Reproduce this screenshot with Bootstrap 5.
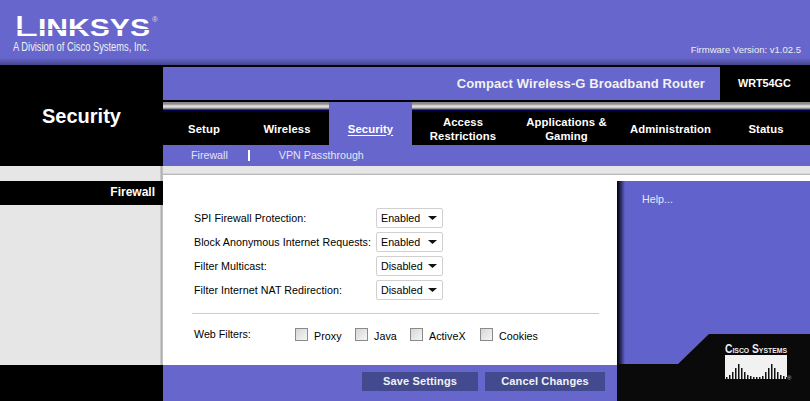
<!DOCTYPE html>
<html lang="en">
<head>
  <meta charset="UTF-8">
  <title>Linksys WRT54GC - Security</title>
  <link href="https://cdn.jsdelivr.net/npm/bootstrap@5.3.0/dist/css/bootstrap.min.css" rel="stylesheet">
  <style>
    html, body { height: 100%; overflow: hidden; }
    body { font-family: "Liberation Sans", Arial, sans-serif; font-size: 10.7px; color: #000; background: #fff; }
    .top-head { flex: none; height: 65px; padding: 0 9px 0 13px; background: linear-gradient(to bottom, #6666cc 0, #6666cc 58px, #45458c 65px); color: #fff; }
    .brand-logo { display: block; }
    .firmware { font-size: 9.5px; line-height: 12px; margin-top: 44px; color: #eee; }
    .mid-band { flex: none; height: 101px; background: #000; }
    .page-title { width: 163px; padding-top: 39px; font-size: 20px; line-height: 24px; font-weight: 700; color: #fff; text-align: center; }
    .title-bar { height: 33px; margin-top: 2px; margin-bottom: 2px; }
    .product-name { width: 557px; padding-right: 15px; background: #6666cc; color: #f2f2f2; font-size: 13px; font-weight: 700; line-height: 33px; text-align: right; letter-spacing: .1px; }
    .model-name { flex: 1; color: #fff; font-size: 10.8px; font-weight: 700; line-height: 33px; padding-left: 18px; }
    .tab-row { height: 43px; background: linear-gradient(to bottom, #858585 0, #8f8f8f 2px, #e2e2e2 4px, #dcdcdc 5px, #777 7px, #000050 8px, #000040 10px, #000 10px) no-repeat; }
    .tab-item { padding-top: 10px; color: #fff; font-size: 11.3px; font-weight: 700; line-height: 14px; text-align: center; letter-spacing: .1px; height: 100%; }
    .tab-item.tab-on { background: #6666cc; }
    .tab-item.tab-on u { text-underline-offset: 2px; }
    .sub-nav { height: 21px; background: #6666cc; color: #e4e4f4; line-height: 21px; padding-left: 28px; }
    .sub-sep { width: 2px; height: 11px; margin: 0 29px 0 20px; background: #fff; }
    .main-part { width: 617px; }
    .body-main { flex: none; height: 199px; }
    .left-col { width: 163px; padding-top: 15px; background: linear-gradient(to right, #e6e6e6 160px, #aaa 161px, #c8c8c8 163px); }
    .side-head { height: 24px; line-height: 22px; padding-right: 8px; background: #000; color: #fff; font-size: 12px; font-weight: 700; text-align: right; }
    .form-panel { flex: 1; background: #fff; }
    .grey-strip { height: 9px; background: linear-gradient(to bottom, #e6e6e6 7px, #aaa 9px); }
    .form-inner { padding: 33px 18px 0 29px; }
    .set-row { height: 20px; margin-bottom: 4px; }
    .set-label { width: 184px; padding: 1px 0 0 2px; letter-spacing: .05px; white-space: nowrap; }
    .form-select.router-select { width: 67px; height: 20px; padding: 0 0 0 4px; border: 1px solid #d0d0d0; border-radius: 2px; font-size: 10.7px; line-height: 18px; color: #000; box-shadow: none;
      background-image: url("data:image/svg+xml,%3Csvg xmlns='http://www.w3.org/2000/svg' width='9' height='4'%3E%3Cpath d='M0 0h9L4.500 4z' fill='%23111'/%3E%3C/svg%3E"); background-size: 9px 4px; background-position: right 5px center; }
    .rule-line { height: 1px; margin: 13px 0 14px; background: #ccc; }
    .filter-label { width: 103px; padding-left: 2px; line-height: 13px; }
    .form-check-input.box-input { width: 13px; height: 13px; margin: 0 6px 0 0; border: 1px solid #8a8a8a; border-radius: 0; background: linear-gradient(135deg, #d6d6d6, #f6f6f6); flex: none; box-shadow: none; }
    .box-text { line-height: 13px; margin-top: 2px; letter-spacing: .05px; }
    .foot-row { flex: 1; background: #6666cc; }
    .foot-black { width: 163px; background: #000; }
    .foot-btns { flex: 1; padding: 7px 12px 0 0; gap: 7px; }
    .btn.router-btn { height: 19px; padding: 0; border: 0; border-radius: 0; background: #434a8f; color: #f2f2f2; font-size: 11px; font-weight: 700; line-height: 17px; letter-spacing: .15px; }
    .btn-save { width: 116px; }
    .btn-cancel { width: 120px; }
    .right-part { flex: 1; background: #fff; }
    .help-panel { flex: none; height: 153px; margin-top: 6px; padding: 10px 0 0 25px; color: #e8e8f8; background: linear-gradient(to right, #000 0, #2c2c66 4px, #6262cc 8px); }
    .cisco-art { display: block; flex: none; background: linear-gradient(to right, #000 0, #2c2c66 4px, #6262cc 8px); }
    .cisco-fill { flex: 1; background: #0a0a0a; }
  </style>
</head>
<body class="d-flex flex-column">
  <div class="top-head d-flex justify-content-between">
    <svg class="brand-logo" width="200" height="58" viewBox="0 0 200 58" role="img" aria-label="Linksys">
      <text x="1" y="36" fill="#fff" font-family="Liberation Sans" font-size="30" textLength="24" lengthAdjust="spacingAndGlyphs">L</text>
      <text x="25" y="36" fill="#fff" font-family="Liberation Sans" font-weight="700" font-size="23" textLength="112" lengthAdjust="spacingAndGlyphs">INKSYS</text>
      <rect x="0" y="29" width="140" height="1" fill="#6666cc"/>
      <text x="139" y="22" fill="#ddd" font-family="Liberation Sans" font-size="8">®</text>
      <text x="0" y="51" fill="#f0f0f0" font-family="Liberation Sans" font-size="12" textLength="136" lengthAdjust="spacingAndGlyphs">A Division of Cisco Systems, Inc.</text>
    </svg>
    <div class="firmware">Firmware Version: v1.02.5</div>
  </div>

  <div class="mid-band d-flex">
    <div class="page-title">Security</div>
    <div class="flex-grow-1">
      <div class="title-bar d-flex">
        <div class="product-name">Compact Wireless-G Broadband Router</div>
        <div class="model-name">WRT54GC</div>
      </div>
      <div class="tab-row d-flex">
        <div class="tab-item d-flex align-items-center justify-content-center" style="width:82px">Setup</div>
        <div class="tab-item d-flex align-items-center justify-content-center" style="width:84px">Wireless</div>
        <div class="tab-item tab-on d-flex align-items-center justify-content-center" style="width:83px"><u>Security</u></div>
        <div class="tab-item d-flex align-items-center justify-content-center" style="width:102px">Access<br>Restrictions</div>
        <div class="tab-item d-flex align-items-center justify-content-center" style="width:105px">Applications &amp;<br>Gaming</div>
        <div class="tab-item d-flex align-items-center justify-content-center" style="width:103px">Administration</div>
        <div class="tab-item d-flex align-items-center justify-content-center" style="width:88px">Status</div>
      </div>
      <div class="sub-nav d-flex align-items-center">Firewall<span class="sub-sep"></span>VPN Passthrough</div>
    </div>
  </div>

  <div class="d-flex flex-grow-1">
    <div class="main-part d-flex flex-column">
      <div class="d-flex body-main">
        <div class="left-col">
          <div class="side-head">Firewall</div>
        </div>
        <div class="form-panel">
          <div class="grey-strip"></div>
          <div class="form-inner">
            <div class="set-row d-flex align-items-center"><div class="set-label">SPI Firewall Protection:</div><select class="form-select router-select"><option>Enabled</option><option>Disabled</option></select></div>
            <div class="set-row d-flex align-items-center"><div class="set-label">Block Anonymous Internet Requests:</div><select class="form-select router-select"><option>Enabled</option><option>Disabled</option></select></div>
            <div class="set-row d-flex align-items-center"><div class="set-label">Filter Multicast:</div><select class="form-select router-select"><option>Disabled</option><option>Enabled</option></select></div>
            <div class="set-row d-flex align-items-center"><div class="set-label">Filter Internet NAT Redirection:</div><select class="form-select router-select"><option>Disabled</option><option>Enabled</option></select></div>
            <div class="rule-line"></div>
            <div class="d-flex align-items-start">
              <div class="filter-label">Web Filters:</div>
              <input class="form-check-input box-input" type="checkbox" id="fProxy"><label class="box-text" for="fProxy" style="width:41px">Proxy</label>
              <input class="form-check-input box-input" type="checkbox" id="fJava"><label class="box-text" for="fJava" style="width:36px">Java</label>
              <input class="form-check-input box-input" type="checkbox" id="fActive"><label class="box-text" for="fActive" style="width:51px">ActiveX</label>
              <input class="form-check-input box-input" type="checkbox" id="fCookies"><label class="box-text" for="fCookies">Cookies</label>
            </div>
          </div>
        </div>
      </div>
      <div class="foot-row d-flex">
        <div class="foot-black"></div>
        <div class="foot-btns d-flex justify-content-end align-items-start">
          <button class="btn router-btn btn-save" type="button">Save Settings</button>
          <button class="btn router-btn btn-cancel" type="button">Cancel Changes</button>
        </div>
      </div>
    </div>
    <div class="right-part d-flex flex-column">
      <div class="grey-strip"></div>
      <div class="help-panel">Help...</div>
      <svg class="cisco-art" width="193" height="64" viewBox="0 0 193 64" role="img" aria-label="Cisco Systems">
        <polygon points="0,30 61,30 92,0 193,0 193,64 0,64" fill="#0a0a0a"/>
        <text x="108" y="19" fill="#eee" font-family="Liberation Sans" font-weight="700" font-size="12" textLength="62" lengthAdjust="spacingAndGlyphs" style="font-variant:small-caps">Cisco Systems</text>
        <rect x="108" y="21" width="62" height="24" fill="#f1f1f1"/>
        <path id="ciscoBars" fill="#111" d=""/>
        <text x="170" y="46" fill="#bbb" font-family="Liberation Sans" font-size="6">®</text>
      </svg>
      <div class="cisco-fill"></div>
    </div>
  </div>

  <script>
    // cisco logo bars, base line at y=45
    const heights = [2,4,7,11,15,11,7,4,3,2,2,2,3,7,11,15,11,7,4,3,2];
    document.getElementById("ciscoBars").setAttribute("d",
      heights.map((h, i) => `M${109 + i * 3} ${45 - h}h1.5v${h}h-1.5z`).join(""));
  </script>
  <script src="https://cdn.jsdelivr.net/npm/bootstrap@5.3.0/dist/js/bootstrap.bundle.min.js"></script>
</body>
</html>
